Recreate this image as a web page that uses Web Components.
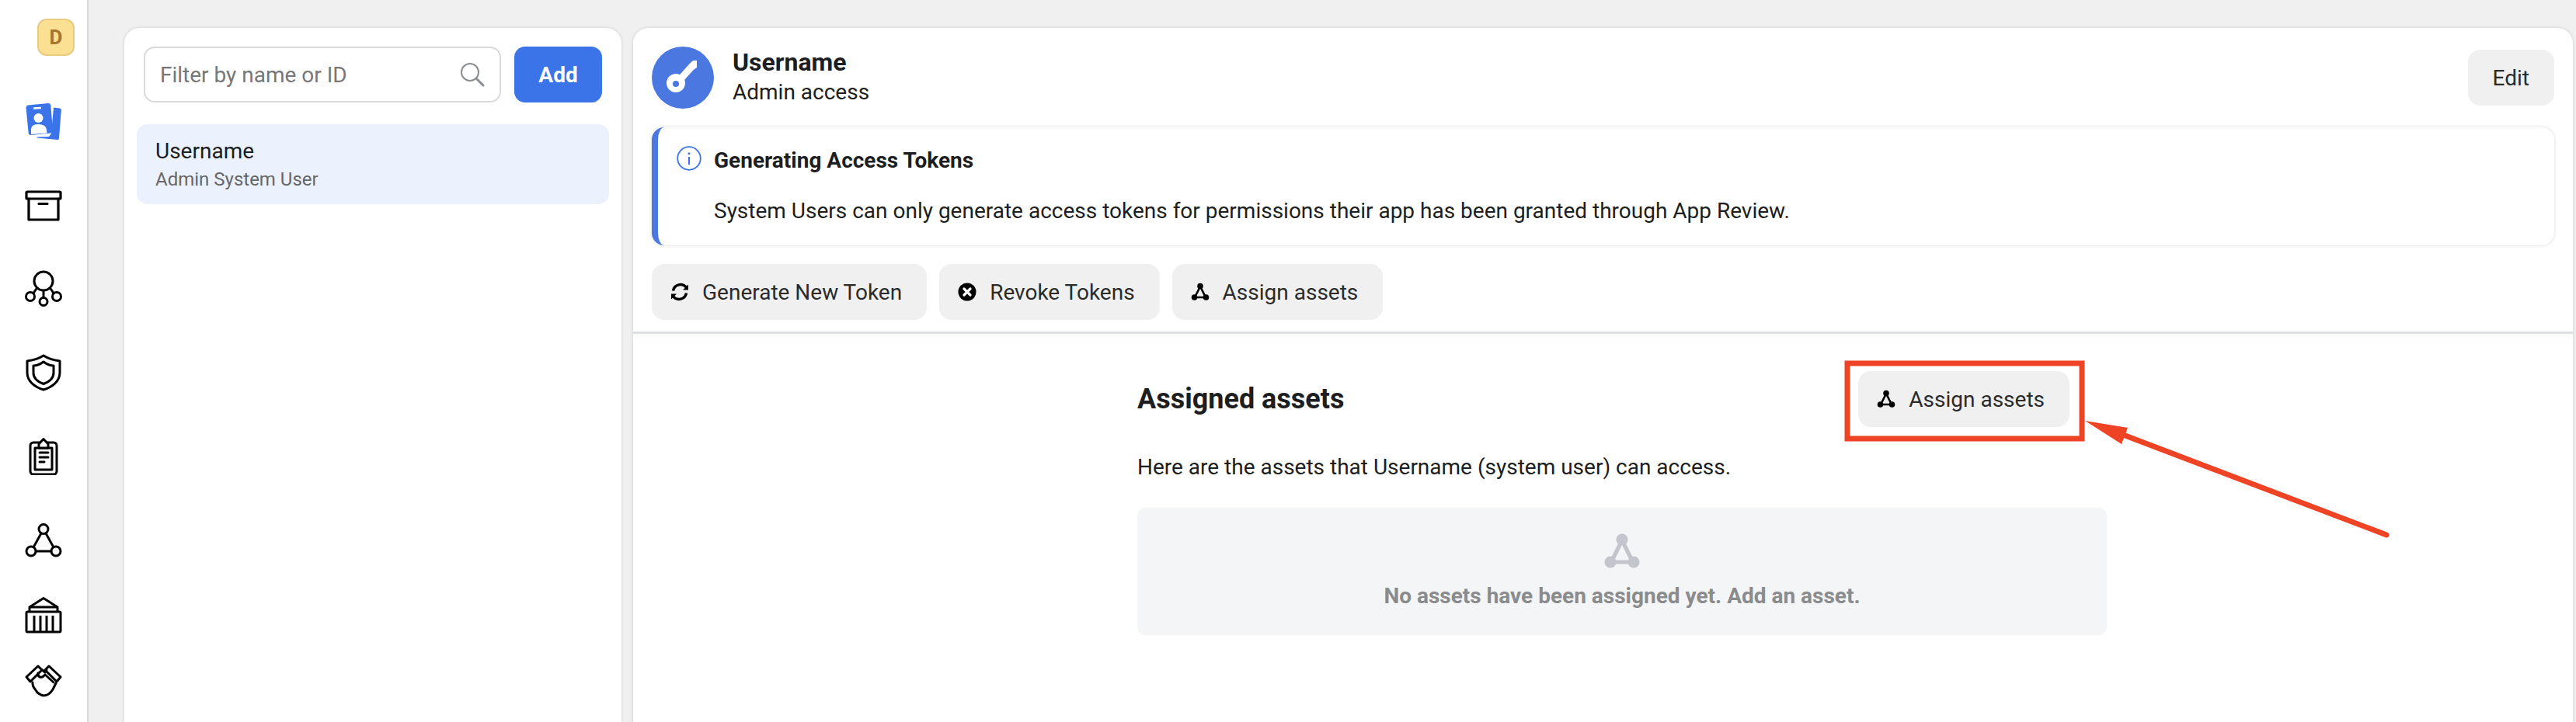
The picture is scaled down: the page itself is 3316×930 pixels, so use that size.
<!DOCTYPE html>
<html lang="en">
<head>
<meta charset="utf-8">
<title>System users</title>
<style>
    html, body { margin: 0; height: 100%; overflow: hidden; background: #f0f0f0; }
    body { font-family: Roboto, "Liberation Sans", sans-serif; color: #1c1e21; }
    app-shell { height: 930px; }
</style>
</head>
<body>
<app-shell>
    <side-nav slot="nav"></side-nav>
    <filter-panel slot="list">
        <user-row name="Username" role="Admin System User"></user-row>
    </filter-panel>
    <detail-panel slot="detail">
        <action-button slot="actions" icon="refresh">Generate New Token</action-button>
        <action-button slot="actions" icon="revoke">Revoke Tokens</action-button>
        <action-button slot="actions" icon="assets">Assign assets</action-button>
    </detail-panel>
    <red-callout slot="overlay"></red-callout>
</app-shell>

<script>
// Icon bodies, each one drawn on a 48x48 box unless the element says otherwise
const ICONS = {
    cards: `<g fill="#3b74e8">
            <path d="M37 6.500 45 7.500Q47 8 46.800 10L44 46Q44 48.200 42 48L15 45.500 16 44.500 31 44 34 40Z"/>
            <path d="M4 3.500 30 1Q33 1 33.300 3.500L36 36Q36 39 33.500 39.500L8 42Q5 42 4.700 39.500L1.500 6.500Q1.500 4 4 3.500Z"/>
        </g>
        <g fill="#fff">
            <rect x="11" y="6" width="10" height="2.500" rx="1" transform="rotate(-5 16 7)"/>
            <circle cx="17.500" cy="20" r="6"/>
            <path d="M8 41V35Q8 28 17 28Q27 28 28 35L28.500 39.500Z"/>
        </g>`,
    box: `<g fill="none" stroke="#000" stroke-width="3.200" stroke-linejoin="round" stroke-linecap="round">
            <rect x="2" y="7" width="44" height="9" rx="1"/>
            <path d="M5 16V43H43V16"/>
            <path d="M18 22.500H29"/>
        </g>`,
    network: `<g fill="none" stroke="#000" stroke-width="3">
            <circle cx="24" cy="14" r="12"/>
            <circle cx="7" cy="34" r="5.500"/>
            <circle cx="41" cy="34" r="5.500"/>
            <circle cx="24" cy="40.500" r="5"/>
            <path d="M24 26V35.500M11 29.500 15.500 23M37 29.500 32.500 23"/>
        </g>`,
    shield: `<g fill="none" stroke="#000" stroke-width="3" stroke-linejoin="round">
            <path d="M24 2C30 6 38 8 45 9V24C45 36 34 43 24 46C14 43 3 36 3 24V9C10 8 18 6 24 2Z"/>
            <path d="M24 10C28 13 33 15 37 15V24C37 32 31 36 24 38.500C17 36 11 32 11 24V15C15 15 20 13 24 10Z"/>
        </g>`,
    clipboard: `<g fill="none" stroke="#000" stroke-width="3" stroke-linejoin="round" stroke-linecap="round">
            <rect x="7" y="6" width="34" height="41" rx="4"/>
            <path d="M13 13H35V41H13Z"/>
            <path d="M24 1.500 30 8V13H18V8Z" fill="#fff"/>
            <path d="M19 19H30M19 25H30M19 31H25"/>
        </g>`,
    triangle: `<g fill="none" stroke="#000" stroke-width="3">
            <circle cx="24" cy="9.500" r="6"/>
            <circle cx="8" cy="38" r="6"/>
            <circle cx="40" cy="38" r="6"/>
            <path d="M21 15 11 33M27 15 37 33M14 38H34"/>
        </g>`,
    bank: `<g fill="none" stroke="#000" stroke-width="3" stroke-linejoin="round">
            <path d="M6 20V14L24 2.500 42 14V20"/>
            <path d="M6 14H42"/>
            <rect x="2" y="20" width="44" height="26" rx="1.500"/>
            <path d="M12 25V46M20 25V46M28 25V46M36 25V46"/>
        </g>`,
    handshake: `<g fill="none" stroke="#000" stroke-width="3" stroke-linejoin="round" stroke-linecap="round">
            <path d="M2 20 17 6 22 11 7 26Z"/>
            <path d="M46 20 31 6 26 11 41 26Z"/>
            <path d="M10 27C9 33 14 36 16 40C19 42 21 44 24 44C28 44 33 41 36 36L40 28"/>
            <path d="M17 15C16 19 20 22 24 19L26 17 37 27M22 11 26 14 28 11"/>
        </g>`,
    refresh: `<g fill="none" stroke="#000" stroke-width="3.500">
            <path d="M20.500 6.500A9.500 9.500 0 0 0 3.500 10.500"/>
            <path d="M3.500 17.500A9.500 9.500 0 0 0 20.500 13.500"/>
        </g>
        <path d="M16 9.500H23V2.500ZM8 14.500H1V21.500Z" fill="#000"/>`,
    revoke: `<circle cx="12" cy="12" r="11.500" fill="#000"/>
        <path d="M8 8 16 16M16 8 8 16" stroke="#fff" stroke-width="3.200" stroke-linecap="round"/>`,
    assets: `<g stroke="currentColor" fill="currentColor">
            <path d="M12 5 5 19H19Z" fill="none" stroke-width="2.600"/>
            <circle cx="12" cy="4.500" r="3.800" stroke="none"/>
            <circle cx="4.500" cy="19" r="3.800" stroke="none"/>
            <circle cx="19.500" cy="19" r="3.800" stroke="none"/>
        </g>`,
    info: `<circle cx="16" cy="16" r="14.800" fill="none" stroke="#3b74e8" stroke-width="1.800"/>
        <path d="M16 14V24" stroke="#3b74e8" stroke-width="2"/>
        <circle cx="16" cy="9.800" r="1.500" fill="#3b74e8"/>`,
    search: `<g fill="none" stroke="#8a8d91" stroke-width="2">
            <circle cx="13" cy="13" r="11"/>
            <path d="M21 21 30 30" stroke-width="3" stroke-linecap="round"/>
        </g>`,
    key: `<circle cx="40" cy="40" r="40" fill="#4a78e0"/>
        <circle cx="31" cy="47" r="12" fill="#fff"/>
        <path d="M36 43 53 24" stroke="#fff" stroke-width="9"/>
        <path d="M50 21Q53 17 58 18V27L52 31 48 30Z" fill="#fff"/>
        <circle cx="31" cy="48" r="4" fill="#4a78e0"/>`
};

class SketchIcon extends HTMLElement {
    connectedCallback() {
        const size = this.getAttribute('size') || 48;
        const box = this.getAttribute('box') || size;
        this.attachShadow({ mode: 'open' }).innerHTML = `
        <style>
            :host { display: block; flex: none; width: ${size}px; height: ${size}px; }
            svg { display: block; width: 100%; height: 100%; }
        </style>
        <svg viewBox="0 0 ${box} ${box}">${ICONS[this.getAttribute('name')]}</svg>`;
    }
}
customElements.define('sketch-icon', SketchIcon);

class AppShell extends HTMLElement {
    constructor() {
        super();
        this.attachShadow({ mode: 'open' }).innerHTML = `
        <style>
            :host {
                display: grid;
                grid-template-columns: 114px 686px 1fr;
                position: relative;
                overflow: hidden;
                width: 3316px;
                box-sizing: border-box;
                padding-right: 4px;
            }
            ::slotted([slot="list"]) { margin: 36px 0 0 46px; }
            ::slotted([slot="detail"]) { margin: 36px 0 0 15px; }
        </style>
        <slot name="nav"></slot>
        <slot name="list"></slot>
        <slot name="detail"></slot>
        <slot name="overlay"></slot>`;
    }
}
customElements.define('app-shell', AppShell);

class SideNav extends HTMLElement {
    constructor() {
        super();
        const items = [
            ['cards', 60], ['box', 60], ['network', 60], ['shield', 60],
            ['clipboard', 60], ['triangle', 60], ['bank', 48], ['handshake', 36]
        ];
        const cells = items.map(([name, gap]) =>
            `<sketch-icon name="${name}" style="margin-top:${gap}px"></sketch-icon>`).join('');
        this.attachShadow({ mode: 'open' }).innerHTML = `
        <style>
            :host {
                display: flex;
                flex-direction: column;
                align-items: center;
                box-sizing: border-box;
                width: 114px;
                height: 930px;
                overflow: hidden;
                background: #fff;
                border-right: 2px solid #d9d9d9;
            }
            .badge {
                flex: none;
                align-self: flex-end;
                box-sizing: border-box;
                width: 48px;
                height: 48px;
                margin: 24px 16px 0 0;
                display: flex;
                align-items: center;
                justify-content: center;
                background: #fbdf92;
                border: 2px solid #e8cb80;
                border-radius: 12px;
                color: #a5752c;
                font: 700 26px Roboto, sans-serif;
            }
        </style>
        <div class="badge">D</div>
        ${cells}`;
    }
}
customElements.define('side-nav', SideNav);

class FilterPanel extends HTMLElement {
    constructor() {
        super();
        this.attachShadow({ mode: 'open' }).innerHTML = `
        <style>
            :host {
                display: block;
                box-sizing: border-box;
                height: 960px;
                padding: 24px 16px;
                background: #fff;
                border-radius: 20px;
                box-shadow: 0 0 4px rgba(0, 0, 0, .14);
            }
            .top { display: flex; gap: 17px; margin: 0 9px 28px; }
            .field {
                flex: 1;
                box-sizing: border-box;
                height: 72px;
                display: flex;
                align-items: center;
                justify-content: space-between;
                padding: 0 19px;
                border: 2px solid #dadada;
                border-radius: 14px;
                color: #777;
                font-size: 28px;
            }
            .add {
                width: 113px;
                height: 72px;
                display: flex;
                align-items: center;
                justify-content: center;
                background: #3b74e8;
                border-radius: 14px;
                color: #fff;
                font-size: 28px;
                font-weight: 700;
            }
        </style>
        <div class="top">
            <div class="field">Filter by name or ID<sketch-icon name="search" size="32"></sketch-icon></div>
            <div class="add">Add</div>
        </div>
        <slot></slot>`;
    }
}
customElements.define('filter-panel', FilterPanel);

class UserRow extends HTMLElement {
    connectedCallback() {
        this.attachShadow({ mode: 'open' }).innerHTML = `
        <style>
            :host {
                display: flex;
                flex-direction: column;
                justify-content: center;
                box-sizing: border-box;
                height: 103px;
                padding: 0 24px;
                background: #ebf1fd;
                border-radius: 14px;
            }
            .name { font-size: 28px; line-height: 38px; color: #1c1e21; }
            .role { font-size: 24px; line-height: 34px; color: #65676b; }
        </style>
        <div class="name">${this.getAttribute('name')}</div>
        <div class="role">${this.getAttribute('role')}</div>`;
    }
}
customElements.define('user-row', UserRow);

class ActionButton extends HTMLElement {
    constructor() {
        super();
        this.attachShadow({ mode: 'open' });
    }

    connectedCallback() {
        const icon = this.getAttribute('icon');
        this.shadowRoot.innerHTML = `
        <style>
            :host {
                display: inline-flex;
                align-items: center;
                gap: 17px;
                box-sizing: border-box;
                height: 72px;
                padding: 0 32px 0 24px;
                background: #f0f0f1;
                border-radius: 16px;
                color: #2b2b2b;
                font-size: 28px;
                white-space: nowrap;
            }
            :host([plain]) { padding: 0 32px; }
            sketch-icon { color: #000; }
        </style>
        ${icon ? `<sketch-icon name="${icon}" size="24"></sketch-icon>` : ''}
        <slot></slot>`;
    }
}
customElements.define('action-button', ActionButton);

class InfoAlert extends HTMLElement {
    constructor() {
        super();
        this.attachShadow({ mode: 'open' }).innerHTML = `
        <style>
            :host {
                display: block;
                box-sizing: border-box;
                height: 152px;
                padding: 24px 24px 0 24px;
                background: #fff;
                border-left: 8px solid #4a78e0;
                border-radius: 16px;
                box-shadow: 0 0 4px rgba(0, 0, 0, .16);
            }
            .head { display: flex; align-items: center; gap: 16px; height: 32px; }
            .title { padding-top: 5px; font-size: 28px; font-weight: 700; color: #1c1e21; }
            .body { margin: 36px 0 0 48px; font-size: 28px; line-height: 32px; color: #1c1e21; }
        </style>
        <div class="head">
            <sketch-icon name="info" size="32"></sketch-icon>
            <div class="title">Generating Access Tokens</div>
        </div>
        <div class="body">System Users can only generate access tokens for permissions their app has been granted through App Review.</div>`;
    }
}
customElements.define('info-alert', InfoAlert);

class DetailPanel extends HTMLElement {
    constructor() {
        super();
        this.attachShadow({ mode: 'open' }).innerHTML = `
        <style>
            :host {
                display: block;
                height: 960px;
                background: #fff;
                border-radius: 20px;
                box-shadow: 0 0 4px rgba(0, 0, 0, .14);
            }
            header {
                box-sizing: border-box;
                height: 394px;
                padding: 24px 24px 0;
                border-bottom: 3px solid #dddfe3;
            }
            .who { display: flex; align-items: flex-start; height: 104px; }
            .names { flex: 1; margin-left: 24px; }
            .names b { display: block; font-size: 32px; line-height: 40px; color: #1c1e21; }
            .names span { display: block; font-size: 28px; line-height: 38px; color: #1c1e21; }
            .edit { margin-top: 4px; }
            .actions { display: flex; gap: 16px; margin-top: 24px; }
            .fade { height: 14px; background: linear-gradient(#fafafa, #fff); }
        </style>
        <header>
            <div class="who">
                <sketch-icon name="key" size="80"></sketch-icon>
                <div class="names"><b>Username</b><span>Admin access</span></div>
                <action-button class="edit" plain>Edit</action-button>
            </div>
            <info-alert></info-alert>
            <div class="actions"><slot name="actions"></slot></div>
        </header>
        <div class="fade"></div>
        <assets-section></assets-section>`;
    }
}
customElements.define('detail-panel', DetailPanel);

class AssetsSection extends HTMLElement {
    constructor() {
        super();
        this.attachShadow({ mode: 'open' }).innerHTML = `
        <style>
            :host {
                display: block;
                box-sizing: content-box;
                width: 1248px;
                margin-left: 649px;
                padding-top: 34px;
            }
            .row {
                display: flex;
                align-items: center;
                justify-content: space-between;
                height: 72px;
                padding-right: 48px;
            }
            h2 { margin: 0; font-size: 36px; font-weight: 700; color: #1c1e21; }
            p { margin: 36px 0 0; font-size: 28px; line-height: 32px; color: #1c1e21; }
            .empty {
                display: flex;
                flex-direction: column;
                align-items: center;
                box-sizing: border-box;
                height: 164px;
                margin-top: 36px;
                padding-top: 32px;
                background: #f4f5f7;
                border-radius: 10px;
            }
            .empty sketch-icon { color: #c2c5cc; }
            .empty div { margin-top: 17px; font-size: 28px; font-weight: 700; color: #8a8b8d; }
        </style>
        <div class="row">
            <h2>Assigned assets</h2>
            <action-button icon="assets">Assign assets</action-button>
        </div>
        <p>Here are the assets that Username (system user) can access.</p>
        <div class="empty">
            <sketch-icon name="assets" size="48" box="24"></sketch-icon>
            <div>No assets have been assigned yet. Add an asset.</div>
        </div>`;
    }
}
customElements.define('assets-section', AssetsSection);

// The red box and arrow drawn over the screenshot
class RedCallout extends HTMLElement {
    constructor() {
        super();
        this.attachShadow({ mode: 'open' }).innerHTML = `
        <style>
            :host { position: absolute; inset: 0; pointer-events: none; }
            svg { position: absolute; left: 0; top: 0; width: 3316px; height: 930px; }
        </style>
        <svg viewBox="0 0 3316 930">
            <rect x="2378" y="468" width="302" height="97" fill="none" stroke="#ee4325" stroke-width="7"/>
            <path d="M2684 542 2739 551 2731 572Z" fill="#ee4325"/>
            <path d="M2733 560 3072 689" stroke="#ee4325" stroke-width="7" stroke-linecap="round"/>
        </svg>`;
    }
}
customElements.define('red-callout', RedCallout);
</script>
</body>
</html>
